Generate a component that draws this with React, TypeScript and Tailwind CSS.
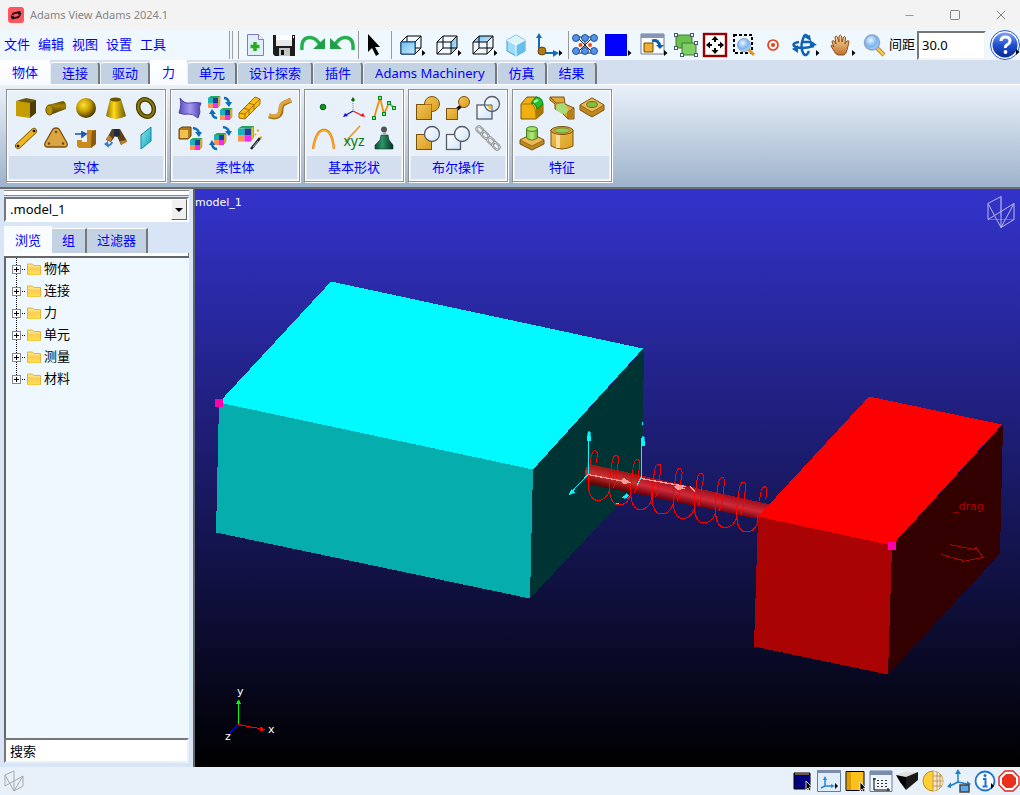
import type { ReactNode } from 'react';
import { Minus, Square, X } from 'lucide-react';
import clsx from 'clsx';

type Tool = { label: string; icon: ReactNode };

/* Shared gradients used by the toolbar drawings */
function Gradients() {
  return (
    <svg className="absolute h-0 w-0" aria-hidden="true">
      <defs>
        <radialGradient id="goldBall" cx="0.38" cy="0.35" r="0.65">
          <stop offset="0" stopColor="#ffe23a" />
          <stop offset="0.5" stopColor="#c9a000" />
          <stop offset="1" stopColor="#4a3c00" />
        </radialGradient>
        <linearGradient id="goldAcross">
          <stop offset="0" stopColor="#8a6d00" />
          <stop offset="0.4" stopColor="#ffd91a" />
          <stop offset="1" stopColor="#6b5500" />
        </linearGradient>
        <linearGradient id="goldDown" x2="0" y2="1">
          <stop offset="0" stopColor="#5a4700" />
          <stop offset="0.35" stopColor="#a98700" />
          <stop offset="1" stopColor="#3c2f00" />
        </linearGradient>
        <linearGradient id="amber" x2="1" y2="1">
          <stop offset="0" stopColor="#f2c25a" />
          <stop offset="1" stopColor="#d99f1c" />
        </linearGradient>
        <linearGradient id="iceFill" x2="1" y2="1">
          <stop offset="0" stopColor="#ffffff" />
          <stop offset="1" stopColor="#cfe4fb" />
        </linearGradient>
        <linearGradient id="skyFill" x2="1" y2="1">
          <stop offset="0" stopColor="#6cbcf2" />
          <stop offset="1" stopColor="#c9eafd" />
        </linearGradient>
        <linearGradient id="tealFill" x2="1" y2="1">
          <stop offset="0" stopColor="#8be9ee" />
          <stop offset="1" stopColor="#12a3bd" />
        </linearGradient>
        <linearGradient id="violetFill">
          <stop offset="0" stopColor="#5a4bb8" />
          <stop offset="0.5" stopColor="#a79af0" />
          <stop offset="1" stopColor="#5040b0" />
        </linearGradient>
        <linearGradient id="greenAcross">
          <stop offset="0" stopColor="#0d4a32" />
          <stop offset="0.4" stopColor="#2f9468" />
          <stop offset="1" stopColor="#06301f" />
        </linearGradient>
        <linearGradient id="limeAcross">
          <stop offset="0" stopColor="#7fc045" />
          <stop offset="0.5" stopColor="#b4ec7c" />
          <stop offset="1" stopColor="#66a82f" />
        </linearGradient>
        <radialGradient id="lens" cx="0.4" cy="0.35" r="0.7">
          <stop offset="0" stopColor="#eaf6ff" />
          <stop offset="0.6" stopColor="#7ab4f2" />
          <stop offset="1" stopColor="#b9dcfa" />
        </radialGradient>
        <linearGradient id="helpFill" x2="0" y2="1">
          <stop offset="0" stopColor="#7ba4f4" />
          <stop offset="0.5" stopColor="#1f50d0" />
          <stop offset="1" stopColor="#0a2a96" />
        </linearGradient>
        <linearGradient id="folderFill" x2="0" y2="1">
          <stop offset="0" stopColor="#fbc95a" />
          <stop offset="1" stopColor="#ffe14a" />
        </linearGradient>
        <linearGradient id="handFill" x2="0" y2="1">
          <stop offset="0" stopColor="#ffd9a0" />
          <stop offset="1" stopColor="#c0702c" />
        </linearGradient>
      </defs>
    </svg>
  );
}

function Icon24({ children }: { children: ReactNode }) {
  return (
    <svg viewBox="0 0 24 24" className="h-6 w-6 overflow-visible" fill="none" aria-hidden="true">
      {children}
    </svg>
  );
}

/* Toolbar drawing without a fly-out mark */
function Bar28({ children }: { children: ReactNode }) {
  return (
    <svg viewBox="0 0 28 28" className="h-7 w-7" fill="none" aria-hidden="true">
      {children}
    </svg>
  );
}

/* Toolbar drawing with the small fly-out triangle */
function Bar35({ children }: { children: ReactNode }) {
  return (
    <svg viewBox="0 0 35 28" className="h-7 w-[35px]" fill="none" aria-hidden="true">
      {children}
      <path d="M28 19v6l3.5-3z" fill="#000" />
    </svg>
  );
}

/* Meshed block, used in the flexible body group */
function MeshCube({ x, y }: { x: number; y: number }) {
  return (
    <g transform={`translate(${x} ${y})`}>
      <path d="M0 2l3-2h9l-2 2z" fill="#1fa85a" />
      <path d="M10 2l2-2v9l-2 2z" fill="#c8d020" stroke="#c04020" strokeWidth=".4" />
      <rect y="2" width="5" height="5" fill="#17b5b8" />
      <rect x="5" y="2" width="5" height="5" fill="#1b3f9e" />
      <rect y="7" width="5" height="5" fill="#ff9452" />
      <rect x="5" y="7" width="5" height="5" fill="#f02cf0" />
    </g>
  );
}

const blueCurve = { stroke: '#0b6cb8', strokeWidth: 2.4 };

const solids: Tool[] = [
  {
    label: '长方体',
    icon: (
      <Icon24>
        <path d="M2 5l10-3 10 2-6 4z" fill="#6e5a05" />
        <path d="M2 5l14 2v15L2 20z" fill="#c59d00" />
        <path d="M16 7l6-3v13l-6 5z" fill="#4c3d00" />
      </Icon24>
    ),
  },
  {
    label: '圆柱',
    icon: (
      <Icon24>
        <path d="M4 9L19 5q4 1 3 8L6 19z" fill="url(#goldDown)" />
        <ellipse cx="5.5" cy="14" rx="3.6" ry="5" fill="#b28f00" stroke="#6b5500" />
      </Icon24>
    ),
  },
  { label: '球体', icon: <Icon24><circle cx="12" cy="12" r="10" fill="url(#goldBall)" /></Icon24> },
  {
    label: '锥台',
    icon: (
      <Icon24>
        <path d="M6 3L2 20q10 6 20 0L17 3z" fill="url(#goldAcross)" />
        <ellipse cx="11.5" cy="3.5" rx="5.5" ry="2" fill="#6b5500" />
      </Icon24>
    ),
  },
  {
    label: '圆环',
    icon: (
      <Icon24>
        <ellipse cx="12" cy="12" rx="7.5" ry="9" transform="rotate(-30 12 12)" stroke="#4a3f00" strokeWidth="4.6" />
        <ellipse cx="12" cy="12" rx="7.5" ry="9" transform="rotate(-30 12 12)" stroke="#8c7a10" strokeWidth="2" />
      </Icon24>
    ),
  },
  {
    label: '连杆',
    icon: (
      <Icon24>
        <path d="M4 20L20 5" stroke="#6b4a00" strokeWidth="6" strokeLinecap="round" />
        <path d="M4 20L20 5" stroke="#f0b41c" strokeWidth="4.6" strokeLinecap="round" />
        <circle cx="4" cy="20" r="1.3" fill="#000" />
        <circle cx="20" cy="5" r="1.3" fill="#000" />
      </Icon24>
    ),
  },
  {
    label: '板',
    icon: (
      <Icon24>
        <path d="M9 3q3-2 6 0l8 14q1 4-2 4H3q-3 0-2-4z" fill="#dba642" stroke="#7d5312" strokeWidth="1.3" />
        <circle cx="12" cy="6" r="1.2" fill="#6b4208" />
        <circle cx="5" cy="17.5" r="1.2" fill="#6b4208" />
        <circle cx="19" cy="17.5" r="1.2" fill="#6b4208" />
      </Icon24>
    ),
  },
  {
    label: '拉伸',
    icon: (
      <Icon24>
        <path d="M13 4h9v14l-5 4H5l-2-2v-6h5v2h5z" fill="#c98a1d" />
        <path d="M18 5l4-1v14l-5 4v-5z" fill="#8a5a10" />
        <path d="M1 8h8M8 6l4 2-4 3z" stroke="#1a4fa8" strokeWidth="1.6" fill="#3f7fe0" />
      </Icon24>
    ),
  },
  {
    label: '旋转',
    icon: (
      <Icon24>
        <path d="M8 3h8l7 12-6 4-4-9h-2l-4 6-5-2z" fill="#5c401c" />
        <path d="M10 3h5l1 6-3 2-3-1z" fill="#1c2a40" />
        <path d="M2 13l3-4 3 3-1 4zM17 19l-1-4 7-1v2z" fill="#b8822e" />
        <path d="M8 16q-1 4-5 3" stroke="#3b7cc8" strokeWidth="2" />
        <path d="M0 18l4-3 1 7z" fill="#3b7cc8" />
      </Icon24>
    ),
  },
  {
    label: '平面',
    icon: <Icon24><path d="M7 9L17 1v14L7 23z" fill="url(#tealFill)" stroke="#0a87a0" /></Icon24>,
  },
];

const flexible: Tool[] = [
  {
    label: '柔性面',
    icon: (
      <Icon24>
        <path d="M2 2q4 6 10 5t11 0q-3 5-1 9l-2 6q-6-5-10-4t-9-1q3-9 1-15z" fill="url(#violetFill)" stroke="#4a3cab" />
      </Icon24>
    ),
  },
  {
    label: '刚柔转换',
    icon: (
      <Icon24>
        <MeshCube x={0} y={0} />
        <MeshCube x={12} y={12} />
        <path d="M16 2q4 0 5 5" {...blueCurve} />
        <path d="M17 6h7l-3 5zM1 18l3-5 4 5z" fill="#0b6cb8" />
        <path d="M9 22q-4 0-5-5" {...blueCurve} />
      </Icon24>
    ),
  },
  {
    label: '梁网格',
    icon: (
      <Icon24>
        <path d="M1 17L17 1l5 2v5L7 23l-6-1z" fill="#f9bf10" stroke="#a66a00" />
        <path d="M1 17l6 1L22 3M7 18v5M6 12l5 2v5M11 7l5 2v5" stroke="#a66a00" />
      </Icon24>
    ),
  },
  {
    label: '柔性连杆',
    icon: (
      <Icon24>
        <path d="M1 20q6 2 9 0 3-2 3-6 0-6 4-7l6-3" stroke="#a87418" strokeWidth="5" />
        <path d="M1 19q6 2 9 0 2-2 2-6 1-6 5-7l6-2" stroke="#dba642" strokeWidth="3.6" />
      </Icon24>
    ),
  },
  {
    label: '刚体转柔性体',
    icon: (
      <Icon24>
        <path d="M1 3l3-2h9v9l-3 3H1z" fill="#b07818" stroke="#6b4208" />
        <rect x="2" y="4" width="8" height="8" fill="#f0c050" />
        <path d="M15 2q6 1 6 6" {...blueCurve} />
        <path d="M17 6h7l-3 5z" fill="#0b6cb8" />
        <MeshCube x={12} y={12} />
      </Icon24>
    ),
  },
  {
    label: '柔性体互换',
    icon: (
      <Icon24>
        <MeshCube x={6} y={7} />
        <path d="M15 1q6 1 6 6M9 23q-5 0-5-6" {...blueCurve} />
        <path d="M17 5h7l-3 5zM1 19l3-5 3 5z" fill="#0b6cb8" />
      </Icon24>
    ),
  },
  {
    label: '柔性体生成',
    icon: (
      <Icon24>
        <g transform="scale(1.3)"><MeshCube x={0} y={0} /></g>
        <path d="M13 23l9-11" stroke="#222" strokeWidth="2.5" />
        <path d="M15 21l5-6" stroke="#9ab" strokeWidth="1" />
        <path d="M19 4l2 1M22 11l2 1M17 8l1 1" stroke="#f0b000" strokeWidth="2" />
      </Icon24>
    ),
  },
];

const construction: Tool[] = [
  { label: '设计点', icon: <Icon24><circle cx="11" cy="11" r="2.8" fill="#0b9a1a" stroke="#045a0c" /></Icon24> },
  {
    label: '标记点',
    icon: (
      <Icon24>
        <path d="M11 15l-7 4" stroke="#1414d8" strokeWidth="1.2" />
        <path d="M11 15l8 4" stroke="#f01010" strokeWidth="1.2" />
        <path d="M11 7v8" stroke="#7a8a80" strokeDasharray="1 1" />
        <path d="M9 4l2-3 2 3-2 2z" fill="#0a6a0a" />
        <path d="M1 21l2-4 3 3z" fill="#1414d8" />
        <path d="M23 21l-5-1 3-3z" fill="#f01010" />
      </Icon24>
    ),
  },
  {
    label: '折线',
    icon: (
      <Icon24>
        <path d="M2 22L8 2l4 16 5-11 5 5" stroke="#e8920c" strokeWidth="1.8" />
        {[[2, 22], [8, 2], [12, 18], [17, 7], [22, 12]].map(([x, y]) => (
          <rect key={x} x={x - 1.5} y={y - 1.5} width="3" height="3" fill="#7ce87c" stroke="#0a8a1a" />
        ))}
      </Icon24>
    ),
  },
  {
    label: '样条',
    icon: (
      <Icon24>
        <path d="M1 23Q4 4 12 4T22 23" stroke="#f07800" strokeWidth="2.4" />
        <path d="M1 23Q4 4 12 4T22 23" stroke="#ffc020" strokeWidth="1" />
      </Icon24>
    ),
  },
  {
    label: '坐标',
    icon: (
      <Icon24>
        <path d="M3 16L18 0" stroke="#f09010" strokeWidth="1.5" />
        <text x="12" y="20" textAnchor="middle" fontSize="14" fill="#087a12" className="font-['Noto_Sans']">xyz</text>
      </Icon24>
    ),
  },
  {
    label: '质量点',
    icon: (
      <Icon24>
        <path d="M9 9h7l1 5 4 5v4H3v-4l5-5z" fill="url(#greenAcross)" stroke="#06402a" strokeWidth=".6" />
        <circle cx="12" cy="3.5" r="3" fill="#555" />
        <rect x="11" y="6" width="3" height="3" fill="#aaa" />
      </Icon24>
    ),
  },
];

const booleans: Tool[] = [
  {
    label: '合并',
    icon: (
      <Icon24>
        <circle cx="16" cy="8" r="7.5" fill="url(#amber)" stroke="#7a5210" />
        <rect x="0.5" y="8.5" width="15" height="15" fill="url(#amber)" stroke="#7a5210" />
        <path d="M9 8.5h6.5V15" stroke="#b07818" />
      </Icon24>
    ),
  },
  {
    label: '合并接触',
    icon: (
      <Icon24>
        <path d="M9 15l6-5" stroke="#000" strokeWidth="3" />
        <circle cx="18" cy="6" r="5.5" fill="url(#amber)" stroke="#7a5210" />
        <rect x="0.5" y="12.5" width="11" height="11" fill="url(#amber)" stroke="#7a5210" />
      </Icon24>
    ),
  },
  {
    label: '相交',
    icon: (
      <Icon24>
        <rect x="1" y="9" width="15" height="14" fill="url(#iceFill)" stroke="#555c68" strokeWidth="1.3" />
        <circle cx="16" cy="8" r="7.5" fill="url(#iceFill)" stroke="#555c68" strokeWidth="1.3" />
        <path d="M11 9.5h4v4q-3-1-4-4z" fill="#f4c040" />
        <path d="M9 9h7v6" stroke="#555c68" />
      </Icon24>
    ),
  },
  {
    label: '相减',
    icon: (
      <Icon24>
        <rect x="0.5" y="8.5" width="15" height="15" fill="url(#amber)" stroke="#7a5210" />
        <circle cx="16" cy="8" r="7.5" fill="url(#iceFill)" stroke="#555c68" strokeWidth="1.3" />
      </Icon24>
    ),
  },
  {
    label: '分离',
    icon: (
      <Icon24>
        <rect x="0.5" y="8.5" width="14" height="15" fill="url(#iceFill)" stroke="#555c68" strokeWidth="1.3" />
        <circle cx="16" cy="8" r="7.5" fill="url(#iceFill)" stroke="#555c68" strokeWidth="1.3" />
      </Icon24>
    ),
  },
  {
    label: '链',
    icon: (
      <Icon24>
        {[[4, 4], [9, 9], [15, 15], [20, 20]].map(([x, y]) => (
          <g key={x} transform={`rotate(45 ${x} ${y})`}>
            <rect x={x - 4} y={y - 2.5} width="8" height="5" rx="2.5" stroke="#808080" strokeWidth="2" />
            <rect x={x - 4} y={y - 2.5} width="8" height="5" rx="2.5" stroke="#d8d8d8" strokeWidth=".9" />
          </g>
        ))}
      </Icon24>
    ),
  },
];

const features: Tool[] = [
  {
    label: '倒圆',
    icon: (
      <Icon24>
        <path d="M1 8l6-7h10l6 7v9l-7 6H1z" fill="#f0b010" stroke="#7a5800" />
        <path d="M1 8h11q4 3 4 15" stroke="#a87800" />
        <path d="M16 13l7-4v8l-7 6z" fill="#a87800" />
        <path d="M11 7l5-6q6 0 7 7l-6 5q-1-6-6-6z" fill="#1fc42a" stroke="#0b7a14" />
        <path d="M14 6l4-2" stroke="#b8ffb0" strokeWidth="2" />
      </Icon24>
    ),
  },
  {
    label: '倒角',
    icon: (
      <Icon24>
        <path d="M0 1h14l1 7 9 4v11h-6l-7-7-6-3V8L0 4z" fill="#e0a838" stroke="#7a5210" />
        <path d="M0 1l6 6h8M18 23v-7l6-4" stroke="#7a5210" />
        <path d="M7 8l7-1 4 6-1 4-5 1-6-4z" fill="#a6dc78" />
        <path d="M18 16l5-3v9h-5z" fill="#b88018" />
      </Icon24>
    ),
  },
  {
    label: '孔',
    icon: (
      <Icon24>
        <path d="M0 9l12-7 12 7v5l-12 7-12-7z" fill="#c08820" stroke="#7a5210" />
        <path d="M0 9l12-7 12 7-12 7z" fill="#ecb954" stroke="#7a5210" strokeWidth=".7" />
        <ellipse cx="12" cy="8.5" rx="5.5" ry="3" fill="#7fc045" stroke="#7a6a10" />
      </Icon24>
    ),
  },
  {
    label: '凸台',
    icon: (
      <Icon24>
        <path d="M0 14l12-6 12 6v4l-12 6-12-6z" fill="#c08820" stroke="#7a5210" />
        <path d="M0 14l12-6 12 6-12 6z" fill="#ecb954" stroke="#7a5210" strokeWidth=".7" />
        <path d="M6.5 3v9q5 4 11 0V3z" fill="url(#limeAcross)" stroke="#4a8420" />
        <ellipse cx="12" cy="3" rx="5.5" ry="2.4" fill="#a6e46c" stroke="#4a8420" />
      </Icon24>
    ),
  },
  {
    label: '抽壳',
    icon: (
      <Icon24>
        <path d="M1 4v16q11 6 22 0V4z" fill="url(#amber)" stroke="#7a5210" />
        <path d="M6 7v15h4V8z" fill="#f8dc98" />
        <ellipse cx="12" cy="4.5" rx="11" ry="4" fill="#e0a838" stroke="#7a5210" />
        <ellipse cx="12" cy="4.5" rx="8" ry="2.6" fill="#8ccf58" stroke="#7a5210" strokeWidth=".6" />
      </Icon24>
    ),
  },
];

const groups = [
  { title: '实体', tools: solids, grid: 'grid-cols-5' },
  { title: '柔性体', tools: flexible, grid: 'grid-cols-4' },
  { title: '基本形状', tools: construction, grid: 'grid-cols-3' },
  { title: '布尔操作', tools: booleans, grid: 'grid-cols-3' },
  { title: '特征', tools: features, grid: 'grid-cols-3' },
];

const fileTools: Tool[] = [
  {
    label: '新建',
    icon: (
      <Bar28>
        <path d="M6.5 3.5h11l5 5v16h-16z" fill="#dff0fc" stroke="#8478c4" />
        <path d="M17.5 3.5v5h5" fill="#fff" stroke="#8478c4" />
        <path d="M14 11v9M9.5 15.5h9" stroke="#2fa81c" strokeWidth="3.5" />
      </Bar28>
    ),
  },
  {
    label: '保存',
    icon: (
      <Bar28>
        <path d="M3 4h22v21H5l-2-2z" fill="#1c1c1c" />
        <path d="M6 4h16v11H6z" fill="#e8e8e8" />
        <path d="M6 4h16v5H6z" fill="#fff" />
        <path d="M9 17h11v8H9z" fill="#c4c4c4" />
        <path d="M11 19h3v5h-3z" fill="#111" />
        <path d="M23 5h1v2h-1z" fill="#fff" />
      </Bar28>
    ),
  },
  {
    label: '重做',
    icon: (
      <Bar28>
        <path d="M3 19Q2 7 10 6.5T22 16" stroke="#22b04c" strokeWidth="3.5" />
        <path d="M26 7v11H14z" fill="#22a048" />
      </Bar28>
    ),
  },
  {
    label: '撤销',
    icon: (
      <Bar28>
        <path d="M25 19Q26 7 18 6.5T6 16" stroke="#22b04c" strokeWidth="3.5" />
        <path d="M2 7v11h12z" fill="#22a048" />
      </Bar28>
    ),
  },
];

const cubeLines = 'M7 11l6-6h14v12l-6 6M13 5v12h14M13 17l-6 6M7 11h14v12H7zM21 11l6-6';

const viewTools: Tool[] = [
  {
    label: '前视图',
    icon: (
      <Bar35>
        <path d={cubeLines} stroke="#000" />
        <path d="M7 11h14v12H7z" fill="url(#skyFill)" stroke="#0a4a80" />
      </Bar35>
    ),
  },
  {
    label: '右视图',
    icon: (
      <Bar35>
        <path d="M21 11l6-6v12l-6 6z" fill="url(#skyFill)" />
        <path d={cubeLines} stroke="#000" />
      </Bar35>
    ),
  },
  {
    label: '俯视图',
    icon: (
      <Bar35>
        <path d="M7 11l6-6h14l-6 6z" fill="url(#skyFill)" />
        <path d={cubeLines} stroke="#000" />
      </Bar35>
    ),
  },
  {
    label: '轴测图',
    icon: (
      <Bar28>
        <path d="M14 4l9 5v11l-9 5-9-5V9z" fill="#9edcf8" stroke="#3aa0d8" />
        <path d="M5 9l9-5 9 5-9 5z" fill="#d8f4ff" />
        <path d="M14 14l9-5v11l-9 5z" fill="#66c0ee" />
        <path d="M5 9l9 5 9-5M14 14v11" stroke="#fff" />
      </Bar28>
    ),
  },
  {
    label: '工作坐标',
    icon: (
      <Bar35>
        <path d="M8 5v17h17" stroke="#0f6db8" strokeWidth="2" />
        <path d="M5 7l3-5 3 5zM22 19l6 3-6 4z" fill="#0f6db8" />
        <circle cx="11" cy="20" r="4" fill="#b07a14" stroke="#6a4606" />
      </Bar35>
    ),
  },
];

const displayTools: Tool[] = [
  {
    label: '模型连接',
    icon: (
      <Bar28>
        <path d="M6 6l16 16M22 6L6 22M14 6v16M5 6h18M5 22h18" stroke="#222" />
        {[5, 14, 23].map((x) => [7, 20].map((y) => (
          <circle key={`${x}-${y}`} cx={x} cy={y} r="3.5" fill="#4f93ea" stroke="#123a80" strokeWidth=".8" />
        )))}
        <circle cx="9.5" cy="14" r="2" fill="#f04820" />
        <circle cx="19" cy="14" r="2" fill="#f04820" />
      </Bar28>
    ),
  },
  { label: '背景颜色', icon: <Bar35><path d="M5 3h22v22H5z" fill="#0000ff" /></Bar35> },
  {
    label: '窗口',
    icon: (
      <Bar35>
        <path d="M5 3h23v20H5z" fill="#fff" stroke="#6a7a98" />
        <path d="M5 3h23v4H5z" fill="#8595b4" />
        <path d="M8 12h9v9H8z" fill="#eeb030" stroke="#6b4a00" />
        <path d="M16 10q7-2 8 6" stroke="#0f5fa8" strokeWidth="3" />
        <path d="M20 14h8l-4 4z" fill="#0f5fa8" />
      </Bar35>
    ),
  },
  {
    label: '组合',
    icon: (
      <Bar28>
        <path d="M4 4h16v13H4z" fill="#6abf50" stroke="#3a7a2c" />
        <path d="M10 12h14v12H10z" fill="#82cf66" stroke="#3a7a2c" />
        {[[4, 4], [20, 4], [4, 17], [24, 12], [10, 24], [24, 24]].map(([x, y]) => (
          <rect key={`${x}-${y}`} x={x - 1.5} y={y - 1.5} width="3" height="3" fill="#fff" stroke="#4a5a6a" />
        ))}
      </Bar28>
    ),
  },
  {
    label: '适合窗口',
    icon: (
      <Bar28>
        <rect x="3" y="3" width="22" height="22" fill="#fff" stroke="#960000" strokeWidth="2.4" />
        <path d="M14 7v4M14 17v4M7 14h4M17 14h4" stroke="#000" strokeWidth="2" />
        <path d="M10.5 9L14 5l3.5 4zM10.5 19l3.5 4 3.5-4zM9 10.5l-4 3.5 4 3.5zM19 10.5l4 3.5-4 3.5z" fill="#000" />
      </Bar28>
    ),
  },
  {
    label: '框选缩放',
    icon: (
      <Bar28>
        <rect x="4" y="4" width="18" height="18" stroke="#000" strokeWidth="2" strokeDasharray="3 2" />
        <path d="M18 18l6 6" stroke="#e09a20" strokeWidth="3" />
        <circle cx="14" cy="14" r="6.5" fill="url(#lens)" stroke="#8da5c8" />
      </Bar28>
    ),
  },
  {
    label: '中心点',
    icon: (
      <Bar28>
        <circle cx="14" cy="14" r="5" stroke="#f03c14" strokeWidth="1.7" />
        <circle cx="14" cy="14" r="2" fill="#f03c14" />
      </Bar28>
    ),
  },
  {
    label: '旋转视图',
    icon: (
      <Bar35>
        <path d="M20 6q-3-5-5 2-3 7 0 14 3 5 6-2" stroke="#0f62b4" strokeWidth="2.5" />
        <path d="M11 11q-7 1-5 4 6 4 20 0M13 11h9" stroke="#0f62b4" strokeWidth="2.5" />
        <path d="M16 6l6-2 1 6zM10 14v8l-6-4zM22 9l7 5-7 2z" fill="#0f62b4" />
      </Bar35>
    ),
  },
  {
    label: '平移',
    icon: (
      <Bar35>
        <path
          d="M10 16L8 11q0-2 2-1l2 3-1-7q1-2 2.5 0l1.5 5V5q1.5-2 2.5 0l.5 6 1.5-5q1.5-1 2 .5L21 13l2-3q2-1 2 1l-2 8q-1 4-3 5h-6q-3-1-4-4l-3-5q0-2 3 1z"
          fill="url(#handFill)"
          stroke="#8a5220"
        />
      </Bar35>
    ),
  },
  {
    label: '缩放',
    icon: (
      <Bar28>
        <path d="M17 17l7 7" stroke="#a86a10" strokeWidth="4" />
        <path d="M17 17l7 7" stroke="#f8c850" strokeWidth="2.5" />
        <circle cx="12" cy="11.5" r="7.5" fill="url(#lens)" stroke="#8da5c8" strokeWidth="1.5" />
      </Bar28>
    ),
  },
];

const statusTools: Tool[] = [
  {
    label: '背景',
    icon: (
      <Icon24>
        <path d="M3 4h16v16H3z" fill="#000080" stroke="#000" />
        <path d="M4 5h14" stroke="#e8b010" />
        <path d="M15 12v9l2-2 1.5 3 1.5-1-1.5-3H21z" fill="#000" stroke="#fff" strokeWidth=".8" />
      </Icon24>
    ),
  },
  {
    label: '坐标轴显示',
    icon: (
      <Icon24>
        <path d="M.5 1.5h23v21H.5z" fill="#dfeefa" stroke="#6a7a98" />
        <path d="M0 1h24v3H0z" fill="#7a8cac" />
        <path d="M8 9v8h8M8 17l-4 2" stroke="#2a86d0" strokeWidth="1.5" />
        <path d="M6 11l2-4 2 4zM14 15l4 2-4 2z" fill="#2a86d0" />
        <path d="M18 14v6l3-3z" fill="#000" />
      </Icon24>
    ),
  },
  {
    label: '着色',
    icon: (
      <Icon24>
        <path d="M3 2.5h18v19H3z" fill="#fbc01c" stroke="#000" />
        <path d="M4 3h4v18H4z" fill="#dc9c04" />
        <path d="M17 13v9l2-2 1.5 3 1.5-1-1.5-3H23z" fill="#000" stroke="#fff" strokeWidth=".8" />
      </Icon24>
    ),
  },
  {
    label: '网格',
    icon: (
      <Icon24>
        <path d="M1 2h22v20.5H1z" fill="#eef4fb" stroke="#6a7a98" />
        <path d="M1 2h22v4H1z" fill="#7a8cac" />
        <path d="M5 9v12h16M4 10h3M19 19v3" stroke="#000" />
        <path d="M9 11v8M13 11v8M17 11v8" stroke="#333" strokeWidth="2" strokeDasharray="1 2" />
      </Icon24>
    ),
  },
  {
    label: '透视',
    icon: (
      <Icon24>
        <path d="M1 6l8-3h14l-12 5z" fill="#e0e0d8" />
        <path d="M1 6l10 2v13l-6-8z" fill="#000" />
        <path d="M11 8l12-5v8l-12 10z" fill="#1a1a1a" />
      </Icon24>
    ),
  },
  {
    label: '渲染',
    icon: (
      <Icon24>
        <circle cx="12" cy="12" r="10" fill="#ffd034" stroke="#c08a10" />
        <path d="M12 2a10 10 0 0 1 0 20z" fill="#f4e8d0" />
        <path d="M12 2v20M16 3v18M19 5v14M12 7h9M12 12h10M12 17h9" stroke="#b0884c" strokeWidth=".8" />
      </Icon24>
    ),
  },
  {
    label: '视图原点',
    icon: (
      <Icon24>
        <path d="M11 14V3M11 13l-8 4M11 13l9 2" stroke="#1a80d0" strokeWidth="1.5" />
        <path d="M8 5l3-5 3 5zM4 13v6l-4-1zM20 12l4 3-4 2z" fill="#1a80d0" />
        <path d="M13 16h9v7h-9z" fill="#5aa8e8" stroke="#444" strokeWidth="1.5" />
      </Icon24>
    ),
  },
  {
    label: '信息',
    icon: (
      <Icon24>
        <circle cx="12" cy="12" r="9.5" fill="#fff" stroke="#1a74d0" strokeWidth="1.8" />
        <circle cx="12" cy="6.5" r="1.5" fill="#1a74d0" />
        <path d="M10 10h2.5v7M9.5 17.5h5" stroke="#1a74d0" strokeWidth="2" />
        <path d="M18 14v6l3-3z" fill="#000" />
      </Icon24>
    ),
  },
  {
    label: '停止',
    icon: (
      <Icon24>
        <path d="M8 2h8l6 6v8l-6 6H8l-6-6V8z" fill="#fff" stroke="#d8281c" strokeWidth="1.4" />
        <path d="M9 5h6l4 4v6l-4 4H9l-4-4V9z" fill="#e8301c" />
      </Icon24>
    ),
  },
];

const menus = ['文件', '编辑', '视图', '设置', '工具'];
const ribbonTabs = ['物体', '连接', '驱动', '力', '单元', '设计探索', '插件', 'Adams Machinery', '仿真', '结果'];
const activeTabs = ['物体', '力'];
const treeNodes = ['物体', '连接', '力', '单元', '测量', '材料'];

function ToolButton({ tool }: { tool: Tool }) {
  return (
    <button type="button" aria-label={tool.label} className="flex shrink-0 items-center justify-center">
      {tool.icon}
    </button>
  );
}

function Divider() {
  return <div className="mx-px h-7 w-px shrink-0 bg-[#999]" />;
}

function TitleBar() {
  return (
    <header className="flex h-[30px] items-center bg-[#f3f3f3] pl-2 text-[#858585]">
      <svg viewBox="0 0 16 16" className="h-4 w-4" aria-hidden="true">
        <rect width="16" height="16" rx="3" fill="#ff5560" />
        <path d="M2.5 9L5 5.500 12 4l1.500 3-3 1-.5-1.500-3 .5zM13.500 7L11 11l-7 1.500L2.500 9.500l3-1 .5 1.500 3-.5z" fill="#1c1418" />
      </svg>
      <h1 className="ml-1.5 flex-1 text-[11px]">Adams View Adams 2024.1</h1>
      <button type="button" aria-label="最小化" className="flex w-[46px] justify-center pl-2"><Minus size={13} strokeWidth={1.5} /></button>
      <button type="button" aria-label="最大化" className="flex w-[46px] justify-center pl-2"><Square size={12} strokeWidth={2} /></button>
      <button type="button" aria-label="关闭" className="flex w-[46px] justify-center pl-2"><X size={16} strokeWidth={1.5} /></button>
    </header>
  );
}

function Toolbar() {
  return (
    <div className="flex h-[30px] items-center bg-[#f0f8ff]">
      <nav className="flex flex-1 gap-2 pl-1 text-[#0000ff]">
        {menus.map((menu) => (
          <button key={menu} type="button" className="whitespace-nowrap">{menu}</button>
        ))}
      </nav>
      <div className="mr-1 h-7 w-1 border-x border-[#a0a0a0]" />
      <Divider />
      <div className="flex items-center gap-px px-px">
        {fileTools.map((tool) => <ToolButton key={tool.label} tool={tool} />)}
        <Divider />
        <button type="button" aria-label="选择" className="shrink-0">
          <Bar28>
            <path d="M7 3v18l4-4 4 8 3-2-4-7h5z" fill="#000" />
          </Bar28>
        </button>
        <Divider />
        {viewTools.map((tool) => <ToolButton key={tool.label} tool={tool} />)}
        <Divider />
        {displayTools.map((tool) => <ToolButton key={tool.label} tool={tool} />)}
      </div>
      <label htmlFor="spacing" className="whitespace-nowrap text-black">间距</label>
      <input
        id="spacing"
        defaultValue="30.0"
        className="ml-0.5 h-[29px] w-[69px] border-2 border-b-[#f4f4f4] border-l-[#777] border-r-[#f4f4f4] border-t-[#777] bg-white px-[3px] text-black outline-none"
      />
      <button type="button" aria-label="帮助" className="ml-1 shrink-0">
        <svg viewBox="0 0 30 30" className="h-[30px] w-[30px]" aria-hidden="true">
          <circle cx="15" cy="15" r="14.5" fill="#fff" stroke="#2a55c8" />
          <circle cx="15" cy="15" r="12.5" fill="url(#helpFill)" />
          <path d="M11 11q0-4 4.5-4t4.5 4q0 2-2.5 3.5T15.5 18" fill="none" stroke="#fff" strokeWidth="3" />
          <circle cx="15.5" cy="22" r="1.9" fill="#fff" />
          <path d="M26 19v6l3.5-3z" fill="#000" />
        </svg>
      </button>
    </div>
  );
}

function Ribbon() {
  return (
    <>
      <div role="tablist" className="flex h-6 items-end bg-[#d3dfef] text-[#0000ff]">
        {ribbonTabs.map((tab) => (
          <button
            key={tab}
            type="button"
            role="tab"
            aria-selected={activeTabs.includes(tab)}
            className={clsx(
              'whitespace-nowrap',
              activeTabs.includes(tab)
                ? 'h-6 bg-linear-to-b from-white to-[#f7fbff] px-3 pt-0.5'
                : 'h-[22px] rounded-t-sm border-l border-r-2 border-t border-l-[#e8f0f8] border-r-[#777] border-t-white bg-[#c3d2e3] pl-[11px] pr-[10px]',
            )}
          >
            {tab}
          </button>
        ))}
      </div>
      <div className="flex gap-1 border-b-2 border-[#6c6c6c] border-t border-t-white bg-linear-to-b/srgb from-[#e9f1fa] to-[#9db3cb] px-1.5 pb-[5px] pt-1">
        {groups.map((group) => (
          <section key={group.title} className="border border-[#8f8f8f] bg-[#e8f0fa] shadow-[1px_1px_0_#fff]">
            <div className="border border-white px-[3px] pb-px pt-0.5">
              <div className={clsx('grid', group.grid)}>
                {group.tools.map((tool) => (
                  <button key={tool.label} type="button" aria-label={tool.label} className="flex h-[30px] w-[30px] items-center justify-center">
                    {tool.icon}
                  </button>
                ))}
              </div>
              <h2 className="-mx-0.5 mt-[3px] bg-[#d3dfef] text-center leading-[23px] text-[#0000ff]">{group.title}</h2>
            </div>
          </section>
        ))}
      </div>
    </>
  );
}

function Sidebar() {
  return (
    <aside className="flex w-[195px] shrink-0 flex-col border-r-2 border-[#666] bg-[#d8e5f6] pb-1 pl-1 pr-1">
      <div className="mb-px mt-px h-[6px] border-y border-[#888] bg-white" />
      <div className="relative">
        <select
          aria-label="模型"
          className="h-[25px] w-full appearance-none border-2 border-b-white border-l-[#777] border-r-white border-t-[#777] bg-white pl-1 text-black outline-none"
        >
          <option>.model_1</option>
        </select>
        <span className="pointer-events-none absolute bottom-0.5 right-0.5 top-0.5 flex w-4 items-center justify-center border border-b-[#666] border-l-white border-r-[#666] border-t-white bg-[#f0f0f0]">
          <svg viewBox="0 0 8 4" className="h-1 w-2" aria-hidden="true"><path d="M0 0h8L4 4z" /></svg>
        </span>
      </div>
      <div role="tablist" className="mt-1 flex h-[27px] items-end text-[#0000ff]">
        <button type="button" role="tab" aria-selected="true" className="h-[27px] bg-[#f8fbff] px-[11px] pt-0.5">浏览</button>
        <button type="button" role="tab" aria-selected="false" className="h-[25px] border-r-2 border-t border-r-[#777] border-t-white bg-[#c3d2e3] px-[10px]">组</button>
        <button type="button" role="tab" aria-selected="false" className="h-[25px] border-r-2 border-t border-r-[#777] border-t-white bg-[#c3d2e3] px-[10px]">过滤器</button>
      </div>
      <div className="h-[3px] border-r border-[#777] bg-white" />
      <ul className="flex-1 border-l-2 border-t-2 border-[#666] bg-[#f0f8ff] pl-1.5 text-black">
        {treeNodes.map((node, i) => (
          <li key={node} className="flex h-[22px] items-center">
            <svg viewBox="0 0 15 22" className="h-[22px] w-[15px]" aria-hidden="true">
              <path d={i === treeNodes.length - 1 ? 'M4.5 0v7' : 'M4.5 0v22'} stroke="#000" strokeDasharray="1 1" />
              <path d="M10 11.5h4" stroke="#000" strokeDasharray="1 1" />
              <rect x="0.5" y="7.5" width="8" height="8" fill="#fff" stroke="#888" />
              <path d="M2 11.5h5M4.5 9v5" stroke="#000" />
            </svg>
            <svg viewBox="0 0 14 12" className="h-3 w-3.5" aria-hidden="true">
              <path d="M.5 11.5V1h5l1.5 1.5h6.500v9z" fill="#fbe27a" stroke="#e8b438" />
              <path d="M1 4.5h12v7H1z" fill="url(#folderFill)" />
            </svg>
            <span className="ml-[3px]">{node}</span>
          </li>
        ))}
      </ul>
      <input
        aria-label="搜索"
        placeholder="搜索"
        className="h-[25px] w-full border-2 border-b-[#e8f0f8] border-l-[#777] border-r-[#e8f0f8] border-t-[#777] bg-white px-1 text-black outline-none placeholder:text-black placeholder:opacity-100"
      />
    </aside>
  );
}

/* One coil per entry, stepped along the spring axis */
const coils = Array.from({ length: 8 }, (_, i) => ({ x: i * 21.2, y: i * 4.5 }));

function Viewport() {
  return (
    <main className="flex min-w-0 flex-1 bg-linear-to-b/srgb from-[#3333cc] to-black">
      <svg
        viewBox="195 190 825 577"
        preserveAspectRatio="xMidYMid meet"
        className="min-w-0 flex-1 font-['DejaVu_Sans']"
        shapeRendering="crispEdges"
        role="img"
        aria-label="model_1"
      >
        <defs>
          <linearGradient id="rod" x1="676" y1="484" x2="671" y2="506" gradientUnits="userSpaceOnUse">
            <stop offset="0" stopColor="#c40c0c" />
            <stop offset="0.4" stopColor="#ff3030" />
            <stop offset="0.75" stopColor="#900000" />
            <stop offset="1" stopColor="#280000" />
          </linearGradient>
          <pattern id="stipple" width="2" height="2" patternUnits="userSpaceOnUse">
            <rect width="2" height="2" fill="#999" />
            <path d="M0 0h1v1H0zM1 1h1v1H1z" fill="#fff" />
          </pattern>
          <mask id="rodMask" maskUnits="userSpaceOnUse" x="570" y="450" width="210" height="80">
            <rect x="570" y="450" width="210" height="80" fill="url(#stipple)" />
          </mask>
        </defs>

        <text x="195" y="206" fontSize="11" fill="#fff">model_1</text>
        <g stroke="#b8b8f0" fill="none" shapeRendering="auto">
          <path d="M988 204l13-7v31l-13-24v16l26-16v16l-13 8 13-24" />
          <path d="M988 220h26M1001 197v20" opacity=".4" />
        </g>

        {/* Cyan block */}
        <path d="M331 282l312 67-110 121-314-67z" fill="#00faff" />
        <path d="M219 403l314 67-3 129-314-66z" fill="#05adad" />
        <path d="M533 470l111-121-2 131-112 119z" fill="#003333" />

        {/* Rod and spring */}
        <path d="M588 464l182 41-14 14-171-35q-2-10 3-20z" fill="url(#rod)" mask="url(#rodMask)" />
        {coils.map((c) => (
          <path
            key={c.x}
            transform={`translate(${c.x} ${c.y})`}
            d="M588.5 475V488Q590 501 598 501T609.5 491V483"
            fill="none"
            stroke="#f00"
          />
        ))}
        {[...coils, { x: 169.6, y: 36 }].map((c) => (
          <path
            key={c.x}
            transform={`translate(${c.x} ${c.y})`}
            d="M590 466Q591 451 595 451T596 464"
            fill="none"
            stroke="#f00"
          />
        ))}
        {coils.slice(1).map((c) => (
          <path
            key={c.x}
            transform={`translate(${c.x} ${c.y})`}
            d="M588.5 483Q588 474 590 466M596 464Q596 476 592 484"
            fill="none"
            stroke="#f00"
          />
        ))}

        {/* Marker triads */}
        <g stroke="#00faff" fill="#00faff">
          <path d="M588.5 475V434M588 475l-16 17M641.5 478V438M641 478l-4 8" />
          <path d="M587 441h4l-1-9h-2zM569 495l2-5 4 3zM641 446h4l-1-9h-2zM622 498l5-4 2 2-3 3z" strokeWidth=".6" />
          <path d="M642.5 422v3M616 504h3" />
        </g>
        <g stroke="#ff9a9a" fill="#ff9a9a">
          <path d="M588 475l42 8M641 479l45 8M690 487l5 5" strokeWidth="1.3" />
          <path d="M621 481l3-2 6 4-6 1zM675 487l3-2 6 4-6 1z" />
        </g>

        {/* Red block */}
        <path d="M869 397l133 28-110 121-134-29z" fill="#ff0000" />
        <path d="M758 517l134 29-4 129-134-28z" fill="#aa0303" />
        <path d="M892 546l111-121-3 129-112 121z" fill="#330000" />
        <g stroke="#b00000" fill="none">
          <path d="M950 545l24 5 2-2 7 10-20 4-2-2M941 555l22 6" />
        </g>
        <text x="953" y="510" fontSize="11" fill="#b00000">_drag</text>

        <rect x="215" y="399" width="8" height="8" fill="#ff00aa" />
        <rect x="888" y="542" width="8" height="8" fill="#ff00aa" />

        {/* View orientation */}
        <path d="M238.5 725V703" stroke="#0f0" />
        <path d="M236 704l2.5-4 2.5 4z" fill="#0f0" />
        <path d="M238 725l24 4.5" stroke="#f00" />
        <path d="M260 727l5 3-5 2z" fill="#f00" />
        <path d="M238 725l-8 8" stroke="#00f" />
        <text x="237" y="695" fontSize="11" fill="#fff">y</text>
        <text x="268" y="733" fontSize="11" fill="#fff">x</text>
        <text x="225" y="740" fontSize="11" fill="#fff">z</text>
      </svg>
    </main>
  );
}

function StatusBar() {
  return (
    <footer className="flex h-7 items-center bg-[#e8f0fa] pl-1">
      <svg viewBox="0 0 20 22" className="h-[22px] w-5" fill="none" stroke="#aaa" aria-hidden="true">
        <path d="M1 5l9-4v20L1 5v11L19 6v10l-9 5 9-15" />
      </svg>
      <div className="ml-auto flex items-center">
        {statusTools.map((tool) => (
          <button key={tool.label} type="button" aria-label={tool.label} className="flex w-[26px] justify-center last:w-[22px]">
            {tool.icon}
          </button>
        ))}
      </div>
    </footer>
  );
}

export default function App() {
  return (
    <div className="flex min-h-screen flex-col font-['Noto_Sans','Noto_Sans_CJK_SC',sans-serif] text-[13px]">
      <Gradients />
      <TitleBar />
      <Toolbar />
      <Ribbon />
      <div className="flex flex-1">
        <Sidebar />
        <Viewport />
      </div>
      <StatusBar />
    </div>
  );
}
